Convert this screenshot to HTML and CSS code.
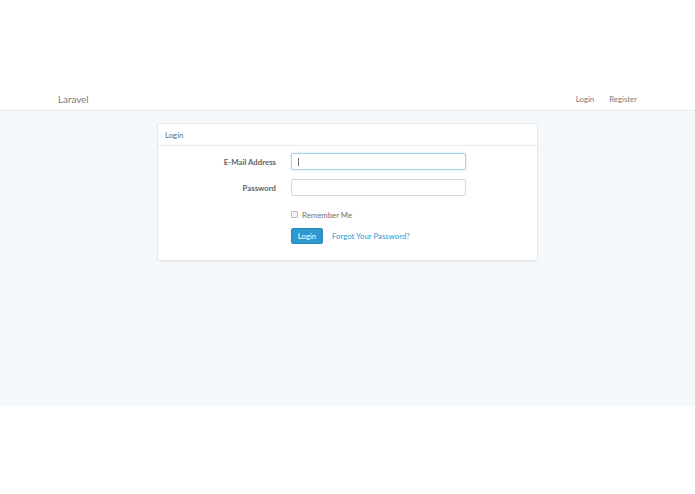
FILE: index.html
```html
<!DOCTYPE html>
<html>
<head>
<meta charset="utf-8">
<link rel="stylesheet" href="styles.css">
</head>
<body>
<div class="top-space"></div>
<div class="app">
  <nav class="navbar">
    <div class="nav-inner">
      <a class="brand">Laravel</a>
      <div class="nav-links">
        <a class="nav-link">Login</a>
        <a class="nav-link">Register</a>
      </div>
    </div>
  </nav>
  <div class="content">
    <div class="panel">
      <div class="panel-heading">Login</div>
      <div class="panel-body">
        <form class="form">
          <label class="label">E-Mail Address</label>
          <div class="input focused"><span class="caret"></span></div>
          <label class="label">Password</label>
          <div class="input"></div>
          <div></div>
          <div class="check-row"><span class="checkbox"></span><span>Remember Me</span></div>
          <div></div>
          <div class="actions"><span class="btn">Login</span><a class="link">Forgot Your Password?</a></div>
        </form>
      </div>
    </div>
  </div>
</div>
</body>
</html>
```
FILE: styles.css
```css
* { box-sizing: border-box; }
html, body { margin: 0; padding: 0; background: #fff; }
body { font-family: "Lato", "Open Sans", sans-serif; font-size: 7.8px; color: #6b7275; }
.top-space { height: 87px; }
.app { background: #f5f8fa; height: 319px; }
.navbar { background: #fff; height: 24px; border-bottom: 1px solid #e4e9ed; }
.nav-inner { display: flex; justify-content: space-between; align-items: center; height: 23px; padding: 0 58px 0 58px; }
.brand { font-size: 9.8px; color: #7a7a7a; }
.nav-links { display: flex; gap: 15px; }
.nav-link { font-size: 7.8px; color: #7a7a7a; }
.content { padding-top: 12px; display: flex; justify-content: center; }
.panel { width: 381px; background: #fff; border: 1px solid #e3e8eb; border-radius: 2px; box-shadow: 0 1px 1px rgba(0,0,0,0.03); }
.panel-heading { height: 22px; padding: 0 7px; display: flex; align-items: center; border-bottom: 1px solid #e8ecef; color: #666; }
.panel-body { padding: 7px 0 16px; }
.form { display: grid; grid-template-columns: 118px 175px; column-gap: 15px; row-gap: 9px; align-items: center; }
.label { text-align: right; font-weight: 700; color: #5f6568; }
.input { height: 17px; border: 1px solid #d6dadc; border-radius: 2px; background: #fff; position: relative; }
.input.focused { border-color: #a5d2ec; box-shadow: 0 0 2px rgba(102,175,233,0.4); }
.caret { position: absolute; left: 6px; top: 4px; width: 1px; height: 8px; background: #777; }
.check-row { display: flex; align-items: center; gap: 4px; margin-top: 4px; height: 11px; }
.checkbox { width: 7px; height: 7px; border: 1px solid #bbb; border-radius: 1px; background: #f3f3f3; }
.actions { display: flex; align-items: center; gap: 9px; margin-top: -1px; }
.btn { width: 32px; height: 16px; background: #3097d1; border: 1px solid #2a88bd; border-radius: 2px; color: #fff; display: flex; align-items: center; justify-content: center; }
.link { color: #3097d1; }
```
